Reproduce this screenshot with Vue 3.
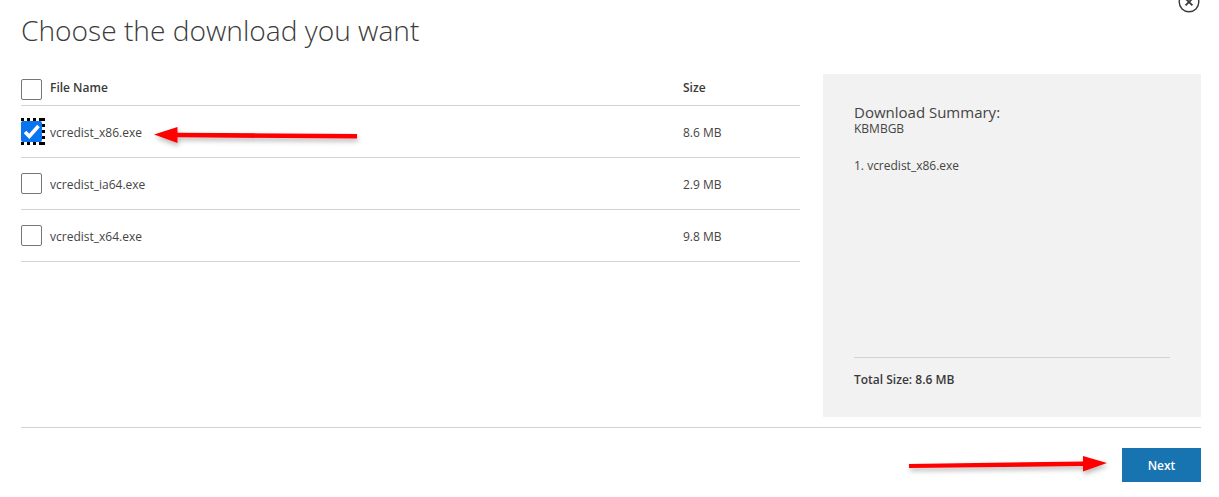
<template>
  <div class="dialog">
    <button class="close" aria-label="Close">
      <svg width="22" height="22" viewBox="0 0 22 22" fill="none" stroke="#3a3a3a">
        <circle cx="11" cy="11" r="9.8" stroke-width="1.4" />
        <path d="M7.6 7.6l6.8 6.8M14.4 7.6l-6.8 6.8" stroke-width="1.8" />
      </svg>
    </button>

    <h1 class="title">Choose the download you want</h1>

    <div class="body">
      <div class="files">
        <div class="row head">
          <span class="check" />
          <span class="name">File Name</span>
          <span class="size">Size</span>
        </div>
        <div v-for="file in files" :key="file.name" class="row">
          <span class="check" :class="{ checked: file.checked }">
            <svg v-if="file.checked" width="21" height="21" viewBox="0 0 21 21" fill="none">
              <path d="M4 11l4.300 4.300L17.500 5" stroke="#fff" stroke-width="3.600" />
            </svg>
          </span>
          <span class="name">{{ file.name }}</span>
          <span class="size">{{ file.size }}</span>
        </div>
      </div>

      <aside class="summary">
        <div class="summary-title">Download Summary:</div>
        <div class="summary-kb">KBMBGB</div>
        <div class="summary-item">1. vcredist_x86.exe</div>
        <div class="summary-total">Total Size: 8.6 MB</div>
      </aside>
    </div>

    <div class="footer">
      <button class="next">Next</button>
    </div>

    <!-- red arrows drawn on top of the screenshot -->
    <svg class="marks" width="1219" height="497" viewBox="0 0 1219 497">
      <defs>
        <filter id="markShadow" x="-10%" y="-100%" width="120%" height="300%">
          <feDropShadow dx="1" dy="3" stdDeviation="2.5" flood-color="#000" flood-opacity="0.28" />
        </filter>
      </defs>
      <g fill="#f00" filter="url(#markShadow)">
        <path d="M154 134.500L177.500 127V132.700L357 134V138.500L177.500 137.300V143Z" />
        <path d="M909 464L1083 461.500V456L1107 463L1083 471.500V466L909 468Z" />
      </g>
    </svg>
  </div>
</template>

<script setup>
const files = [
  { name: 'vcredist_x86.exe', size: '8.6 MB', checked: true },
  { name: 'vcredist_ia64.exe', size: '2.9 MB', checked: false },
  { name: 'vcredist_x64.exe', size: '9.8 MB', checked: false },
]
</script>

<style>
html,
body {
  background: #fff;
  overflow: hidden;
}
</style>

<style scoped>
.dialog {
  position: relative;
  isolation: isolate;
  width: 1219px;
  height: 497px;
  box-sizing: border-box;
  padding: 0 18px 0 21px;
  font-family: "Open Sans", "Noto Sans", sans-serif;
  color: #333;
  overflow: hidden;
}

.close {
  position: absolute;
  top: -9px;
  left: 1178px;
  padding: 0;
  border: 0;
  background: none;
  line-height: 0;
}

.title {
  margin: 0;
  padding-top: 10px;
  height: 74px;
  box-sizing: border-box;
  font-size: 28.15px;
  line-height: 40px;
  font-weight: 300;
  color: #3b3b3b;
}

.body {
  display: flex;
  gap: 23px;
  height: 343px;
}

.files {
  width: 779px;
}

.row {
  display: flex;
  align-items: center;
  height: 52px;
  box-sizing: border-box;
  border-bottom: 1px solid #d2d2d2;
  font-size: 12px;
  color: #444;
}

.row .name,
.row .size {
  padding-top: 2px;
}

.row.head {
  height: 32px;
  font-weight: 600;
  color: #3a3a3a;
}

.row.head .name,
.row.head .size {
  padding-top: 0;
  padding-bottom: 4px;
}

.check {
  flex: none;
  width: 21px;
  height: 21px;
  box-sizing: border-box;
  border: 1px solid #767676;
  border-radius: 2px;
  background: #fff;
}

.check.checked {
  position: relative;
  border: 0;
  background: #0a75ef;
}

.check svg {
  display: block;
}

/* keyboard focus frame, sits behind the blue box */
.check.checked::before {
  content: "";
  position: absolute;
  z-index: -1;
  left: 0;
  top: -3px;
  width: 24px;
  height: 27px;
  background:
    repeating-linear-gradient(90deg, #000 0 3px, transparent 3px 6px) top / 100% 3px no-repeat,
    repeating-linear-gradient(90deg, #000 0 3px, transparent 3px 6px) bottom / 100% 3px no-repeat,
    repeating-linear-gradient(180deg, #000 0 3px, transparent 3px 6px) right / 3px 100% no-repeat;
}

.name {
  margin-left: 8px;
  width: 633px;
}

.summary {
  display: flex;
  flex-direction: column;
  width: 378px;
  box-sizing: border-box;
  padding: 28px 31px 28px;
  background: #f2f2f2;
  color: #444;
}

.summary-title {
  font-size: 15px;
  line-height: 20px;
}

.summary-kb {
  font-size: 12px;
  line-height: 14px;
}

.summary-item {
  margin-top: 21px;
  font-size: 12px;
  line-height: 18px;
}

.summary-total {
  margin-top: auto;
  padding-top: 13px;
  border-top: 1px solid #d2d2d2;
  font-size: 12px;
  line-height: 18px;
  font-weight: 600;
  color: #3a3a3a;
}

.footer {
  display: flex;
  justify-content: flex-end;
  margin-top: 10px;
  padding-top: 20px;
  border-top: 1px solid #d2d2d2;
}

.next {
  width: 79px;
  height: 34px;
  padding: 0;
  border: 0;
  background: #1874b0;
  color: #fff;
  font-family: inherit;
  font-size: 12px;
  font-weight: 600;
}

.marks {
  position: absolute;
  inset: 0;
  pointer-events: none;
}
</style>
